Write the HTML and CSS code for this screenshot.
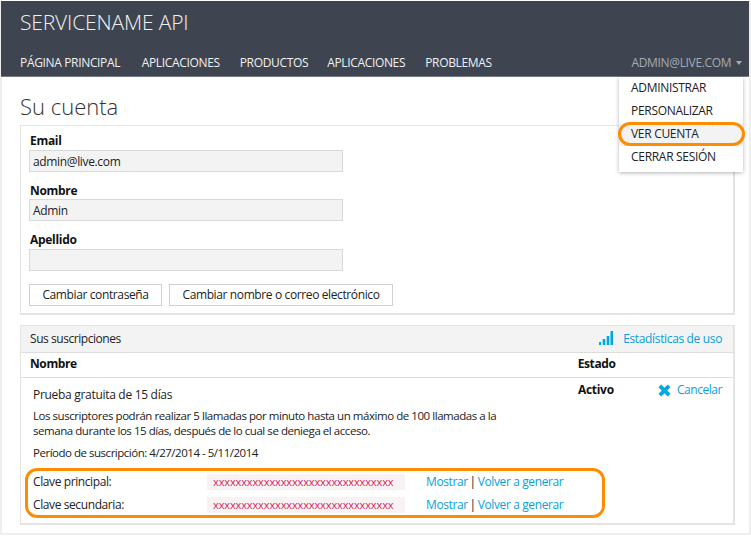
FILE: index.html
```html
<!DOCTYPE html>
<html lang="en">
<head>
    <meta charset="UTF-8">
    <meta name="viewport" content="width=device-width, initial-scale=1.0">
    <title>Su cuenta</title>
    <link rel="stylesheet" href="styles.css">
</head>
<body>
    <div class="page">
        <header class="topbar">
            <div class="brand">SERVICENAME API</div>
            <nav class="nav">
                <a>PÁGINA PRINCIPAL</a>
                <a>APLICACIONES</a>
                <a>PRODUCTOS</a>
                <a>APLICACIONES</a>
                <a>PROBLEMAS</a>
                <span class="user">ADMIN@LIVE.COM <i class="caret"></i></span>
            </nav>
        </header>
        <ul class="menu">
            <li>ADMINISTRAR</li>
            <li>PERSONALIZAR</li>
            <li class="active">VER CUENTA</li>
            <li>CERRAR SESIÓN</li>
        </ul>
        <div class="callout callout-menu"></div>
        <main class="content">
            <h1>Su cuenta</h1>
            <section class="panel profile">
                <label>Email</label>
                <div class="field">admin@live.com</div>
                <label>Nombre</label>
                <div class="field">Admin</div>
                <label>Apellido</label>
                <div class="field"></div>
                <div class="buttons">
                    <button>Cambiar contraseña</button>
                    <button>Cambiar nombre o correo electrónico</button>
                </div>
            </section>
            <section class="panel subs">
                <div class="subs-head">
                    <span>Sus suscripciones</span>
                    <a class="stats">
                        <svg width="14" height="14" viewBox="0 0 14 14"><path d="M0 11h2v3H0zM3.700 8h2.600v6H3.700zM7.700 5h2.600v9H7.700zM11.500 0H14v14h-2.500z" fill="#00a8e0"/></svg>
                        Estadísticas de uso
                    </a>
                </div>
                <div class="subs-cols">
                    <b>Nombre</b>
                    <b class="col-state">Estado</b>
                </div>
                <div class="sub">
                    <div class="sub-main">
                        <div class="sub-title">Prueba gratuita de 15 días</div>
                        <p class="sub-desc">Los suscriptores podrán realizar 5 llamadas por minuto hasta un máximo de 100 llamadas a la semana durante los 15 días, después de lo cual se deniega el acceso.</p>
                        <p class="sub-period">Período de suscripción: 4/27/2014 - 5/11/2014</p>
                    </div>
                    <b class="sub-state">Activo</b>
                    <a class="cancel">
                        <svg width="13" height="13" viewBox="0 0 13 13"><path d="M3.200 0.500L6.500 3.800 9.800 0.500 12.500 3.200 9.200 6.500 12.500 9.800 9.800 12.500 6.500 9.200 3.200 12.500 0.500 9.800 3.800 6.500 0.500 3.200z" fill="#00a8e0"/></svg>
                        Cancelar
                    </a>
                </div>
                <div class="key-row">
                    <span class="key-label">Clave principal:</span>
                    <code class="key">xxxxxxxxxxxxxxxxxxxxxxxxxxxxxxxx</code>
                    <span class="key-links"><a>Mostrar</a> | <a>Volver a generar</a></span>
                </div>
                <div class="key-row">
                    <span class="key-label">Clave secundaria:</span>
                    <code class="key">xxxxxxxxxxxxxxxxxxxxxxxxxxxxxxxx</code>
                    <span class="key-links"><a>Mostrar</a> | <a>Volver a generar</a></span>
                </div>
            </section>
        </main>
        <div class="callout callout-keys"></div>
    </div>
</body>
</html>
```

FILE: styles.css
```css
* {
    box-sizing: border-box;
}

body {
    margin: 0;
    background-color: white;
    font-family: "Open Sans", "Noto Sans", sans-serif;
    font-size: 12px;
    color: #222;
}

.page {
    position: relative;
    width: 751px;
    height: 535px;
    padding-top: 1px;
    border-left: 2px solid #eeeeee;
    border-right: 2px solid #eeeeee;
    border-bottom: 2px solid #eeeeee;
}

.topbar {
    height: 76px;
    margin-left: -1px;
    background: #3e4551;
    border-bottom: 1px solid #767c86;
    color: #f0f0f0;
}

.brand {
    height: 53px;
    padding: 7px 0 0 19px;
    font-size: 21px;
    font-weight: 300;
    letter-spacing: -0.15px;
}

.nav {
    display: flex;
    gap: 20px;
    padding-left: 19px;
    font-size: 12px;
    letter-spacing: -0.34px;
}

.nav a:first-child {
    margin-right: 1.500px;
}

.nav a:nth-child(3) {
    margin-right: -1px;
}

.user {
    position: absolute;
    right: 7px;
    color: #a6abb2;
}

.caret {
    display: inline-block;
    margin-left: 2px;
    border: 3.500px solid transparent;
    border-top: 4px solid #a6abb2;
    border-bottom: 0;
    vertical-align: 2px;
}

.menu {
    position: absolute;
    top: 77px;
    left: 617px;
    width: 124px;
    height: 95px;
    margin: 0;
    padding: 0;
    list-style: none;
    background: white;
    box-shadow: 0 1px 4px rgba(0, 0, 0, 0.3);
    letter-spacing: -0.3px;
}

.menu li {
    height: 23px;
    padding: 2px 0 0 12px;
}

.menu .active {
    background: #f3f3f3;
}

.callout {
    position: absolute;
    border: 3px solid #ff8c00;
}

.callout-menu {
    top: 122px;
    left: 616px;
    width: 127px;
    height: 24px;
    border-radius: 12px;
}

.callout-keys {
    top: 468px;
    left: 23px;
    width: 580px;
    height: 50px;
    border-radius: 12px;
}

.content {
    padding: 0 14px 0 18px;
}

h1 {
    height: 48px;
    margin: 0;
    padding-top: 14px;
    font-size: 22px;
    font-weight: 300;
    line-height: 30px;
    color: #333;
}

.panel {
    border: 2px solid #e4e4e4;
    border-width: 1px 2px 2px 1px;
    background: white;
}

.profile {
    height: 190px;
    padding: 6px 9px;
}

label {
    display: block;
    height: 17.500px;
    font-weight: 700;
    letter-spacing: -0.3px;
    color: #111;
}

.field {
    width: 314px;
    height: 22px;
    margin: 0 0 10px -1px;
    padding: 2px 3px;
    background: #f3f3f3;
    border: 1px solid #d9d9d9;
    letter-spacing: -0.35px;
}

.buttons {
    display: flex;
    gap: 7px;
    margin: 13px 0 0 -1px;
}

button {
    height: 22px;
    padding: 0;
    background: white;
    border: 1px solid #d0d0d0;
    font: inherit;
    letter-spacing: -0.38px;
    color: #222;
}

button:first-child {
    width: 133px;
}

button:last-child {
    width: 224px;
}

.subs {
    height: 200px;
    margin-top: 10px;
}

.subs-head {
    display: flex;
    justify-content: space-between;
    height: 27px;
    padding: 4px 11px 0 9px;
    background: #f3f3f3;
    border-bottom: 1px solid #dddddd;
    letter-spacing: -0.45px;
}

.stats,
.cancel,
.key-links a {
    color: #0a9fd6;
}

.stats {
    letter-spacing: -0.35px;
}

.stats svg {
    margin-right: 7px;
    vertical-align: -2px;
}

.subs-cols {
    display: flex;
    height: 25px;
    padding: 2px 9px 0;
    border-bottom: 1px solid #dddddd;
    color: #111;
    letter-spacing: -0.4px;
}

.col-state {
    margin-left: 501px;
}

.subs-cols b {
    font-weight: 700;
}

.sub {
    display: flex;
    height: 92px;
    padding: 3px 11px 0 12px;
}

.sub-main {
    width: 468px;
}

.sub-title {
    margin-top: 5px;
    letter-spacing: -0.3px;
}

.sub-desc {
    margin: 5px 0 0;
    font-size: 11.500px;
    line-height: 15px;
    letter-spacing: -0.45px;
}

.sub-period {
    margin: 7px 0 0;
    font-size: 11.500px;
    letter-spacing: -0.48px;
}

.sub-state {
    margin-left: 77px;
    color: #111;
    letter-spacing: -0.3px;
}

.cancel {
    margin-left: auto;
    letter-spacing: -0.45px;
}

.cancel svg {
    margin-right: 3px;
    vertical-align: -3px;
}

.key-row {
    display: flex;
    height: 23px;
    padding-left: 12px;
    align-items: center;
}

.key-label {
    width: 174px;
    letter-spacing: -0.4px;
}

.key {
    display: block;
    width: 198px;
    height: 16px;
    padding-left: 6px;
    background: #f9f2f4;
    color: #d0285a;
    font-family: "Open Sans", sans-serif;
    font-size: 11px;
    line-height: 16px;
    letter-spacing: -0.12px;
}

.key-links {
    margin-left: 21px;
    word-spacing: -1.500px;
}

.key-links a {
    letter-spacing: -0.38px;
    word-spacing: 0;
}
```
